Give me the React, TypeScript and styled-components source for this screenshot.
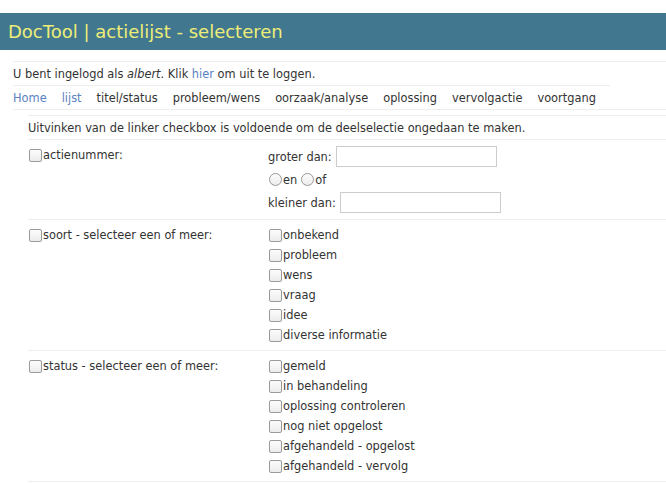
import React from "react";
import styled, { createGlobalStyle } from "styled-components";

const Global = createGlobalStyle`
  html, body { margin: 0; padding: 0; background: #fff; }
  body { font-family: "DejaVu Sans", Verdana, sans-serif; font-size: 11.4px; color: #333; }
`;

const Page = styled.div`
  padding-top: 13px;
`;

const Header = styled.header`
  background: #41778f;
  height: 37px;
  display: flex;
  align-items: center;
  padding-left: 8px;
`;

const Title = styled.h1`
  margin: 0;
  font-weight: normal;
  font-size: 18px;
  color: #eded78;
`;

const Content = styled.div`
  margin-left: 13px;
  margin-top: 11px;
`;

const UserLine = styled.div`
  border-top: 1px solid #eee;
  height: 23px;
  display: flex;
  align-items: center;
`;

const NavWrap = styled.div`
  border-top: 1px solid #eee;
  width: 597px;
`;

const Nav = styled.nav`
  display: flex;
  gap: 15px;
  height: 23px;
  align-items: center;
  border-bottom: 1px solid #eee;
  width: 653px;
`;

const Link = styled.a`
  color: #5a82c2;
  text-decoration: none;
`;

const NavItem = styled.span<{ $link?: boolean }>`
  color: ${(p) => (p.$link ? "#5a82c2" : "#333")};
`;

const Main = styled.div`
  margin-left: 15px;
  margin-top: 5px;
  border-top: 1px solid #eee;
`;

const Hint = styled.div`
  height: 23px;
  display: flex;
  align-items: center;
  border-bottom: 1px solid #eee;
`;

const Section = styled.div`
  display: grid;
  grid-template-columns: 240px 1fr;
  padding: 5px 0 5px;
  border-bottom: 1px solid #eee;
`;

const Left = styled.label`
  display: flex;
  align-items: center;
  height: 20px;
  padding-left: 1px;
`;

const Right = styled.div`
  display: flex;
  flex-direction: column;
`;

const Option = styled.label`
  display: flex;
  align-items: center;
  height: 20px;
  padding-left: 1px;
`;

const FieldRow = styled.div`
  display: flex;
  align-items: center;
  height: 23px;
`;

const Check = styled.input.attrs({ type: "checkbox" })`
  appearance: none;
  margin: 0 1px 0 0;
  width: 13px;
  height: 13px;
  border: 1px solid #9a9a9a;
  border-radius: 2px;
  background: linear-gradient(#fcfcfc, #ececec);
  box-sizing: border-box;
`;

const Radio = styled.input.attrs({ type: "radio" })`
  appearance: none;
  margin: 0 1px 0 0;
  width: 13px;
  height: 13px;
  border: 1px solid #9a9a9a;
  border-radius: 50%;
  background: linear-gradient(#fcfcfc, #ececec);
  box-sizing: border-box;
`;

const RadioLabel = styled.label`
  display: inline-flex;
  align-items: center;
  margin-right: 4px;
  &:first-child { margin-left: 1px; }
`;

const TextInput = styled.input.attrs({ type: "text" })`
  margin: 0 0 0 4px;
  width: 161px;
  height: 21px;
  box-sizing: border-box;
  border: 1px solid #ccc;
  font: inherit;
`;

const soort = ["onbekend", "probleem", "wens", "vraag", "idee", "diverse informatie"];
const status = [
  "gemeld",
  "in behandeling",
  "oplossing controleren",
  "nog niet opgelost",
  "afgehandeld - opgelost",
  "afgehandeld - vervolg",
];

const nav: [string, boolean][] = [
  ["Home", true],
  ["lijst", true],
  ["titel/status", false],
  ["probleem/wens", false],
  ["oorzaak/analyse", false],
  ["oplossing", false],
  ["vervolgactie", false],
  ["voortgang", false],
];

export default function App() {
  return (
    <Page>
      <Global />
      <Header>
        <Title>DocTool | actielijst - selecteren</Title>
      </Header>
      <Content>
        <UserLine>
          <span>
            U bent ingelogd als <em>albert</em>. Klik <Link href="#">hier</Link> om uit te loggen.
          </span>
        </UserLine>
        <NavWrap>
          <Nav>
            {nav.map(([t, l]) => (
              <NavItem key={t} $link={l}>
                {t}
              </NavItem>
            ))}
          </Nav>
        </NavWrap>
        <Main>
          <Hint>Uitvinken van de linker checkbox is voldoende om de deelselectie ongedaan te maken.</Hint>
          <Section>
            <div>
              <Left>
                <Check />
                actienummer:
              </Left>
            </div>
            <Right>
              <FieldRow>
                groter dan: <TextInput />
              </FieldRow>
              <FieldRow>
                <RadioLabel>
                  <Radio name="eo" />
                  en
                </RadioLabel>
                <RadioLabel>
                  <Radio name="eo" />
                  of
                </RadioLabel>
              </FieldRow>
              <FieldRow>
                kleiner dan: <TextInput />
              </FieldRow>
            </Right>
          </Section>
          <Section>
            <div>
              <Left>
                <Check />
                soort - selecteer een of meer:
              </Left>
            </div>
            <Right>
              {soort.map((s) => (
                <Option key={s}>
                  <Check />
                  {s}
                </Option>
              ))}
            </Right>
          </Section>
          <Section>
            <div>
              <Left>
                <Check />
                status - selecteer een of meer:
              </Left>
            </div>
            <Right>
              {status.map((s) => (
                <Option key={s}>
                  <Check />
                  {s}
                </Option>
              ))}
            </Right>
          </Section>
        </Main>
      </Content>
    </Page>
  );
}
